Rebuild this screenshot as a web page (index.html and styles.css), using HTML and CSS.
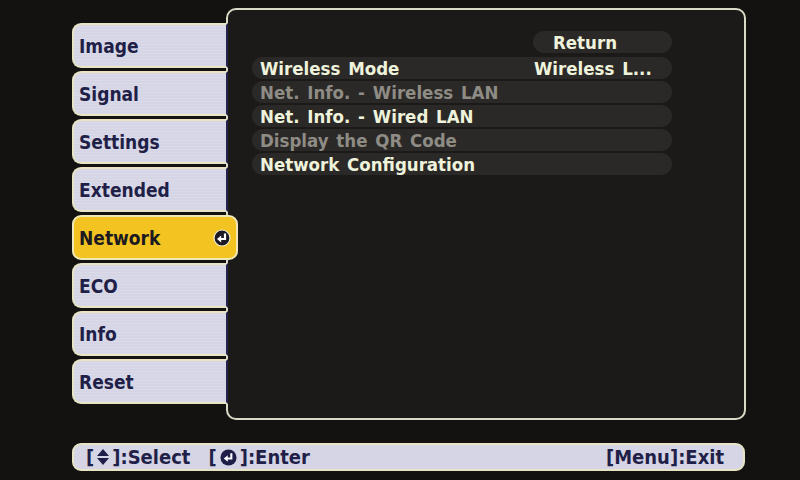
FILE: index.html
```html
<!DOCTYPE html>
<html lang="en">
<head>
    <meta charset="UTF-8">
    <title>Network</title>
    <link rel="stylesheet" href="styles.css">
</head>
<body>
    <div class="screen">
        <div class="menu">
            <ul class="tabs">
                <li class="tab">Image</li>
                <li class="tab">Signal</li>
                <li class="tab">Settings</li>
                <li class="tab">Extended</li>
                <li class="tab active">
                    <span>Network</span>
                    <svg class="enter-icon" viewBox="0 0 18 18" width="18" height="18">
                        <circle cx="9" cy="9" r="8" fill="#1b1a24" stroke="#f4f0d0" stroke-width="1.2"/>
                        <path d="M12 4.5 V10 H7.5" fill="none" stroke="#fff" stroke-width="2.2"/>
                        <path d="M4 10 L8.2 6.6 V13.4 Z" fill="#fff"/>
                    </svg>
                </li>
                <li class="tab">ECO</li>
                <li class="tab">Info</li>
                <li class="tab">Reset</li>
            </ul>

            <div class="panel">
                <div class="row return-row"><span class="value">Return</span></div>
                <div class="row"><span class="label">Wireless Mode</span><span class="value">Wireless L...</span></div>
                <div class="row disabled"><span class="label">Net. Info. - Wireless LAN</span></div>
                <div class="row"><span class="label">Net. Info. - Wired LAN</span></div>
                <div class="row disabled"><span class="label">Display the QR Code</span></div>
                <div class="row"><span class="label">Network Configuration</span></div>
            </div>
        </div>

        <div class="help-bar">
            <span class="hint">[<svg class="key-icon" viewBox="0 0 12 16" width="12" height="16">
                <path d="M6 0 L12 7 H0 Z M0 9 H12 L6 16 Z" fill="#1e1e48"/>
            </svg>]:Select</span>
            <span class="hint">[<svg class="key-icon" viewBox="0 0 18 18" width="17" height="17">
                <circle cx="9" cy="9" r="8.5" fill="#1e1e48"/>
                <path d="M12 4.5 V10 H7.5" fill="none" stroke="#fff" stroke-width="2.2"/>
                <path d="M4 10 L8.2 6.6 V13.4 Z" fill="#fff"/>
            </svg>]:Enter</span>
            <span class="hint exit">[Menu]:Exit</span>
        </div>
    </div>
</body>
</html>
```

FILE: styles.css
```css
* {
    margin: 0;
    padding: 0;
    box-sizing: border-box;
}

body {
    width: 800px;
    height: 480px;
    overflow: hidden;
    background: #141211;
    font-family: "DejaVu Sans Condensed", "DejaVu Sans", sans-serif;
    font-stretch: condensed;
    font-weight: bold;
}

.screen {
    padding: 8px 0 0 72px;
}

.menu {
    display: flex;
    align-items: flex-start;
    height: 412px;
}

/* left column of category tabs */
.tabs {
    list-style: none;
    margin-top: 15px;
    width: 156px;
    flex-shrink: 0;
    display: flex;
    flex-direction: column;
    gap: 3px;
    position: relative;
    z-index: 1;
}

.tab {
    height: 45px;
    display: flex;
    align-items: center;
    padding-left: 5px;
    background: #d5d5e5 repeating-linear-gradient(0deg, rgba(255,255,255,0.12) 0 1px, transparent 1px 3px);
    border: 2px solid #e6e4c4;
    border-right: 2px solid #24244c;
    border-radius: 9px 0 0 9px;
    color: #1f1f48;
    font-size: 19px;
}

.tab.active {
    width: 166px;
    justify-content: space-between;
    padding-right: 5px;
    background: #f2c321;
    border-color: #efe8b8;
    border-radius: 9px;
    color: #1c1a20;
}

.enter-icon {
    display: block;
}

/* right panel with the sub menu */
.panel {
    margin-left: -2px;
    width: 520px;
    height: 412px;
    padding: 21px 0 0 24px;
    background: #1c1a19;
    border: 2px solid #d9dbc6;
    border-radius: 10px;
}

.row {
    display: flex;
    align-items: center;
    width: 420px;
    height: 22px;
    margin-bottom: 2px;
    padding-left: 8px;
    background: #2b2927;
    border-radius: 11px;
    color: #eff3dc;
    font-size: 18.5px;
    word-spacing: 2px;
    white-space: nowrap;
}

.row.disabled {
    color: #8e8c85;
}

.return-row {
    width: 139px;
    margin-left: 281px;
    margin-bottom: 4px;
    padding-left: 20px;
}

.label {
    width: 274px;
}

/* bottom help bar */
.help-bar {
    margin-top: 23px;
    width: 673px;
    height: 28px;
    display: flex;
    align-items: center;
    gap: 18px;
    padding: 0 19px 0 12px;
    background: #d5d5e5;
    border: 2px solid #e6e4c4;
    border-radius: 9px;
    color: #1f1f48;
    font-size: 20px;
}

.hint {
    display: flex;
    align-items: center;
}

.key-icon {
    margin: 0 3px;
}

.exit {
    margin-left: auto;
}
```
